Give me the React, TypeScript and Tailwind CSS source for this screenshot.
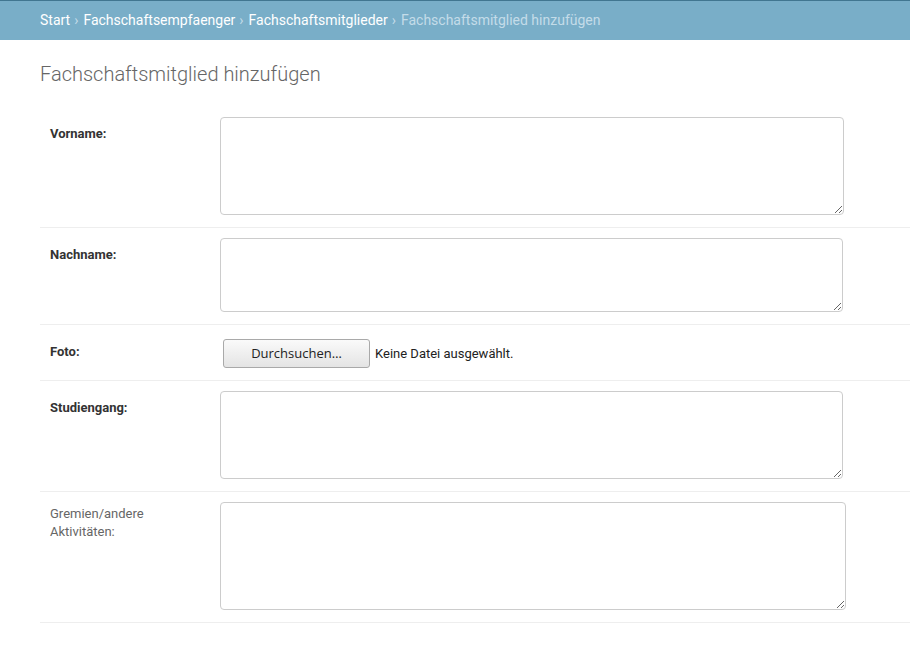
const ROWS = [
  { label: "Vorname:", required: true, h: "h-[98px]", w: "w-[624px]" },
  { label: "Nachname:", required: true, h: "h-[74px]", w: "w-[623px]" },
];

const ROWS_AFTER = [
  { label: "Studiengang:", required: true, h: "h-[88px]", w: "w-[623px]" },
  { label: "Gremien/andere Aktivitäten:", required: false, h: "h-[108px]", w: "w-[626px]" },
];

function TextRow({ label, required, h, w }: { label: string; required: boolean; h: string; w: string }) {
  return (
    <div className="flex pl-[10px] pt-[10px] pb-[12px] border-b border-[#eeeeee]">
      {required ? (
        <label className="w-[170px] shrink-0 pr-[10px] pt-[10px] text-[13px] leading-[14px] font-bold text-[#333333]">
          {label}
        </label>
      ) : (
        <label className="w-[170px] shrink-0 pr-[10px] pt-[3px] text-[13px] leading-[18px] text-[#666666]">
          {label}
        </label>
      )}
      <textarea
        className={`block ${h} ${w} border border-[#cccccc] rounded-[4px] bg-white`}
      />
    </div>
  );
}

export default function App() {
  return (
    <div className="min-h-[647px] bg-white font-['Roboto',sans-serif]">
      {/* Breadcrumbs */}
      <div className="h-[40px] bg-[#79aec8] border-t border-[#417690] px-[40px] flex items-center text-[14px] text-[#c4dce8]">
        <a className="text-white">Start</a>
        <span className="ml-[4px] mr-[5px]">›</span>
        <a className="text-white">Fachschaftsempfaenger</a>
        <span className="ml-[4px] mr-[5px]">›</span>
        <a className="text-white">Fachschaftsmitglieder</a>
        <span className="ml-[4px] mr-[5px]">›</span>
        <span>Fachschaftsmitglied hinzufügen</span>
      </div>

      <div className="pl-[40px] pt-[20px]">
        <h1 className="text-[20px] leading-[28px] font-light text-[#666666] mb-[19px]">
          Fachschaftsmitglied hinzufügen
        </h1>

        <div>
          {ROWS.map((r) => (
            <TextRow key={r.label} {...r} />
          ))}

          {/* Foto */}
          <div className="flex pl-[10px] pt-[14px] pb-[12px] border-b border-[#eeeeee]">
            <label className="w-[170px] shrink-0 pr-[10px] pt-[6px] text-[13px] leading-[14px] font-bold text-[#333333]">
              Foto:
            </label>
            <div className="flex items-center">
              <button className="ml-[3px] h-[29px] w-[147px] border border-[#a9a9a9] rounded-[3px] bg-gradient-to-b from-[#fafafa] to-[#e4e4e4] text-[13px] text-[#222222] font-['Open_Sans',sans-serif]">
                Durchsuchen…
              </button>
              <span className="ml-[5px] text-[13px] text-[#222222]">Keine Datei ausgewählt.</span>
            </div>
          </div>

          {ROWS_AFTER.map((r) => (
            <TextRow key={r.label} {...r} />
          ))}
        </div>
      </div>
    </div>
  );
}
